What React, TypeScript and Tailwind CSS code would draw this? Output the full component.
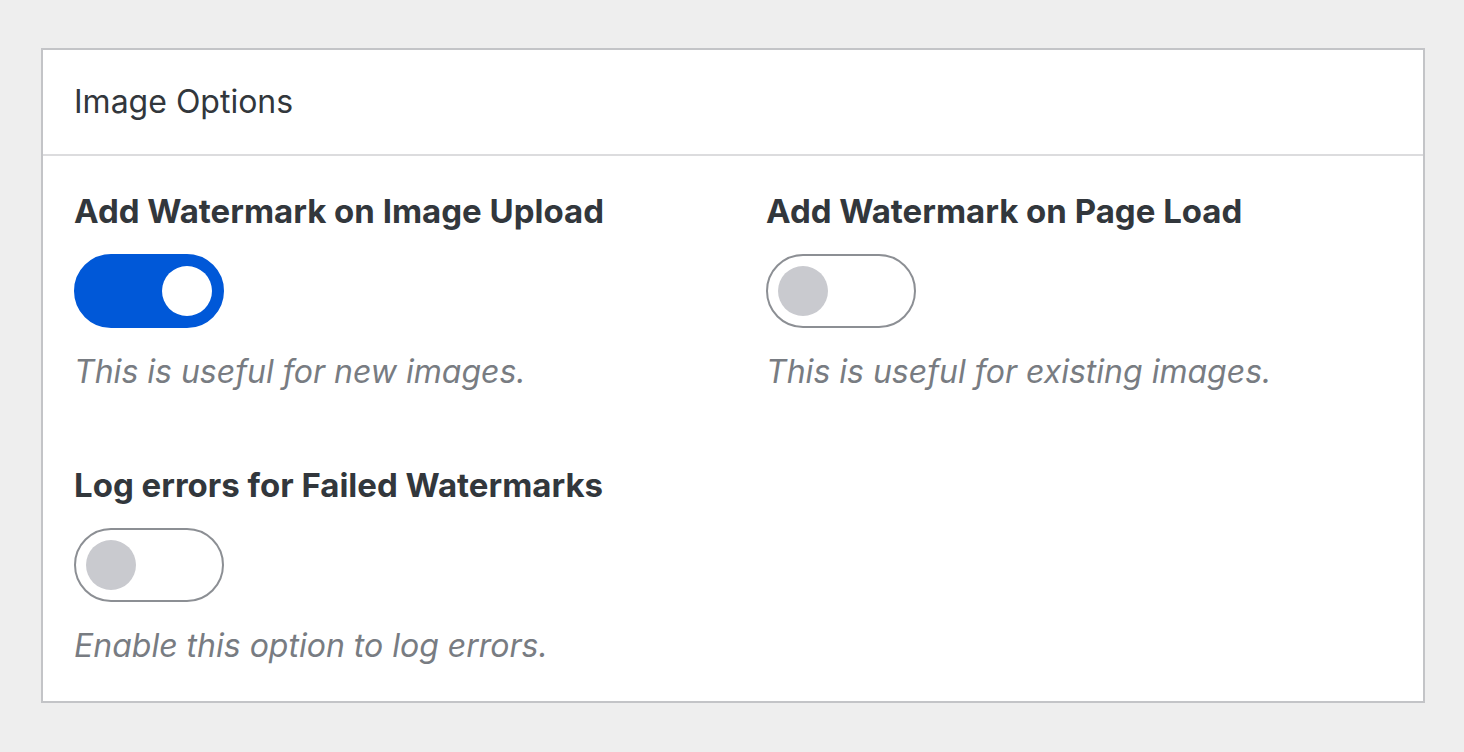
import React, { useState } from 'react';

function Toggle({ on, onChange }: { on: boolean; onChange: () => void }) {
  return (
    <button
      type="button"
      onClick={onChange}
      className={
        on
          ? 'flex h-[74px] w-[150px] items-center justify-end rounded-full border-2 border-[#0058d8] bg-[#0058d8] px-[10px]'
          : 'flex h-[74px] w-[150px] items-center justify-start rounded-full border-2 border-[#8c8f94] bg-white px-[10px]'
      }
    >
      <span className={on ? 'h-[50px] w-[50px] rounded-full bg-white' : 'h-[50px] w-[50px] rounded-full bg-[#c9cacf]'} />
    </button>
  );
}

function Option({ title, help, on, onChange }: { title: string; help: string; on: boolean; onChange: () => void }) {
  return (
    <div>
      <h3 className="text-[33px] leading-[40px] font-bold text-[#32373c]">{title}</h3>
      <div className="mt-[23px]">
        <Toggle on={on} onChange={onChange} />
      </div>
      <p className="mt-[24px] text-[32px] leading-[40px] italic text-[#787c82]">{help}</p>
    </div>
  );
}

export default function App() {
  const [upload, setUpload] = useState(true);
  const [pageLoad, setPageLoad] = useState(false);
  const [logErrors, setLogErrors] = useState(false);

  return (
    <div className="min-h-screen bg-[#eeeeee] pt-[48px] pl-[41px] pr-[39px]" style={{ fontFamily: 'Inter, "Noto Sans", sans-serif' }}>
      <div className="border-2 border-[#c3c4c7] bg-white">
        {/* Header */}
        <div className="flex h-[106px] items-center border-b-2 border-[#dcdcde] px-[31px]">
          <h2 className="text-[32px] font-normal text-[#32373c]">Image Options</h2>
        </div>

        {/* Options */}
        <div className="grid grid-cols-2 gap-x-[66px] gap-y-[73px] px-[31px] pt-[35px] pb-[35px]">
          <Option
            title="Add Watermark on Image Upload"
            help="This is useful for new images."
            on={upload}
            onChange={() => setUpload(!upload)}
          />
          <Option
            title="Add Watermark on Page Load"
            help="This is useful for existing images."
            on={pageLoad}
            onChange={() => setPageLoad(!pageLoad)}
          />
          <Option
            title="Log errors for Failed Watermarks"
            help="Enable this option to log errors."
            on={logErrors}
            onChange={() => setLogErrors(!logErrors)}
          />
        </div>
      </div>
    </div>
  );
}
